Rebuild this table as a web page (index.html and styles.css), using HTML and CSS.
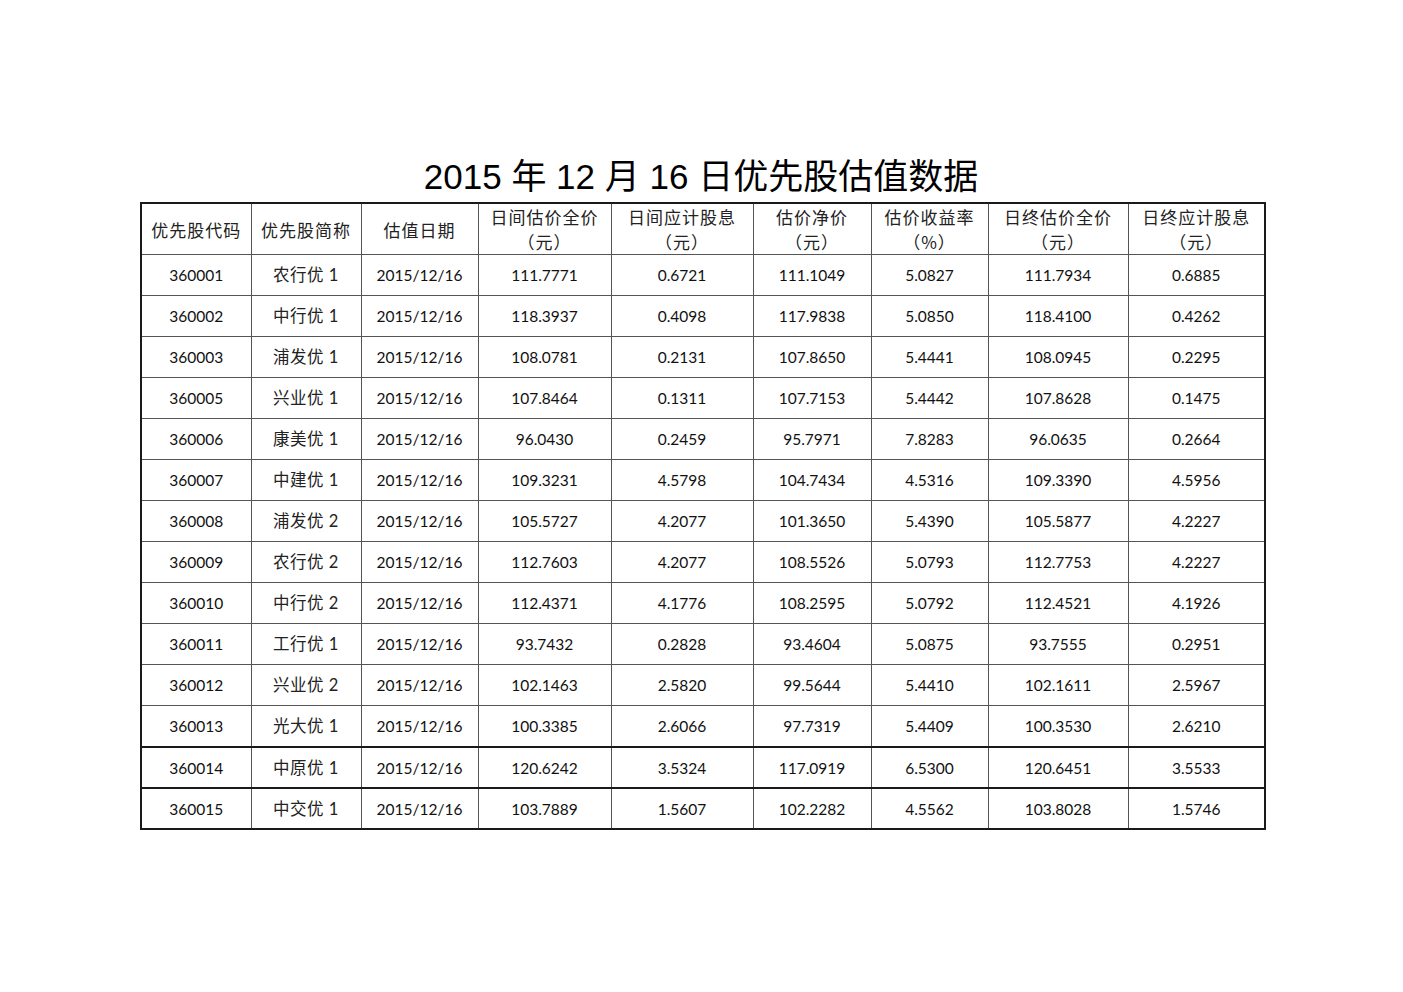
FILE: index.html
```html
<!DOCTYPE html>
<html lang="zh">
<head>
<meta charset="utf-8">
<link rel="stylesheet" href="styles.css">
</head>
<body>
<div class="page">
  <h1 class="title">2015 年 12 月 16 日优先股估值数据</h1>
  <table class="grid">
    <colgroup>
      <col class="c1"><col class="c2"><col class="c3"><col class="c4"><col class="c5"><col class="c6"><col class="c7"><col class="c8"><col class="c9">
    </colgroup>
    <thead>
      <tr>
        <th>优先股代码</th>
        <th>优先股简称</th>
        <th>估值日期</th>
        <th>日间估价全价<br>（元）</th>
        <th>日间应计股息<br>（元）</th>
        <th>估价净价<br>（元）</th>
        <th>估价收益率<br>（%）</th>
        <th>日终估价全价<br>（元）</th>
        <th>日终应计股息<br>（元）</th>
      </tr>
    </thead>
    <tbody>
      <tr><td>360001</td><td class="nm">农行优 1</td><td>2015/12/16</td><td>111.7771</td><td>0.6721</td><td>111.1049</td><td>5.0827</td><td>111.7934</td><td>0.6885</td></tr>
      <tr><td>360002</td><td class="nm">中行优 1</td><td>2015/12/16</td><td>118.3937</td><td>0.4098</td><td>117.9838</td><td>5.0850</td><td>118.4100</td><td>0.4262</td></tr>
      <tr><td>360003</td><td class="nm">浦发优 1</td><td>2015/12/16</td><td>108.0781</td><td>0.2131</td><td>107.8650</td><td>5.4441</td><td>108.0945</td><td>0.2295</td></tr>
      <tr><td>360005</td><td class="nm">兴业优 1</td><td>2015/12/16</td><td>107.8464</td><td>0.1311</td><td>107.7153</td><td>5.4442</td><td>107.8628</td><td>0.1475</td></tr>
      <tr><td>360006</td><td class="nm">康美优 1</td><td>2015/12/16</td><td>96.0430</td><td>0.2459</td><td>95.7971</td><td>7.8283</td><td>96.0635</td><td>0.2664</td></tr>
      <tr><td>360007</td><td class="nm">中建优 1</td><td>2015/12/16</td><td>109.3231</td><td>4.5798</td><td>104.7434</td><td>4.5316</td><td>109.3390</td><td>4.5956</td></tr>
      <tr><td>360008</td><td class="nm">浦发优 2</td><td>2015/12/16</td><td>105.5727</td><td>4.2077</td><td>101.3650</td><td>5.4390</td><td>105.5877</td><td>4.2227</td></tr>
      <tr><td>360009</td><td class="nm">农行优 2</td><td>2015/12/16</td><td>112.7603</td><td>4.2077</td><td>108.5526</td><td>5.0793</td><td>112.7753</td><td>4.2227</td></tr>
      <tr><td>360010</td><td class="nm">中行优 2</td><td>2015/12/16</td><td>112.4371</td><td>4.1776</td><td>108.2595</td><td>5.0792</td><td>112.4521</td><td>4.1926</td></tr>
      <tr><td>360011</td><td class="nm">工行优 1</td><td>2015/12/16</td><td>93.7432</td><td>0.2828</td><td>93.4604</td><td>5.0875</td><td>93.7555</td><td>0.2951</td></tr>
      <tr><td>360012</td><td class="nm">兴业优 2</td><td>2015/12/16</td><td>102.1463</td><td>2.5820</td><td>99.5644</td><td>5.4410</td><td>102.1611</td><td>2.5967</td></tr>
      <tr><td>360013</td><td class="nm">光大优 1</td><td>2015/12/16</td><td>100.3385</td><td>2.6066</td><td>97.7319</td><td>5.4409</td><td>100.3530</td><td>2.6210</td></tr>
      <tr class="thick"><td>360014</td><td class="nm">中原优 1</td><td>2015/12/16</td><td>120.6242</td><td>3.5324</td><td>117.0919</td><td>6.5300</td><td>120.6451</td><td>3.5533</td></tr>
      <tr class="thick"><td>360015</td><td class="nm">中交优 1</td><td>2015/12/16</td><td>103.7889</td><td>1.5607</td><td>102.2282</td><td>4.5562</td><td>103.8028</td><td>1.5746</td></tr>
    </tbody>
  </table>
</div>
</body>
</html>
```

FILE: styles.css
```css
html, body {
  margin: 0;
  padding: 0;
  background: #ffffff;
}

.page {
  padding: 155px 0 0 140px;
  width: 1124px;
}

.title {
  margin: 0 0 3px 0;
  font-family: "Liberation Sans", "Noto Sans CJK SC", sans-serif;
  font-weight: normal;
  font-size: 35px;
  line-height: 44px;
  text-align: center;
  color: #000;
  padding-right: 2px;
}

.grid {
  border-collapse: collapse;
  table-layout: fixed;
  width: 1124px;
  border: 2px solid #1a1a1a;
  font-family: Lato, "Noto Sans CJK SC", sans-serif;
  font-size: 15.5px;
  color: #111;
}

.c1 { width: 110px; }
.c2 { width: 110px; }
.c3 { width: 117px; }
.c4 { width: 133px; }
.c5 { width: 142px; }
.c6 { width: 118px; }
.c7 { width: 117px; }
.c8 { width: 140px; }
.c9 { width: 137px; }

.grid th,
.grid td {
  border: 1px solid #555;
  text-align: center;
  padding: 0;
  font-weight: normal;
}

.grid th {
  height: 50px;
  line-height: 25px;
  font-family: "Noto Sans CJK SC", sans-serif;
  font-size: 17px;
  letter-spacing: 1px;
  color: #222;
}

.grid td {
  height: 40px;
  line-height: 20px;
}

.grid td.nm {
  font-size: 16.5px;
  letter-spacing: 0.5px;
  color: #222;
}

.grid tr.thick td {
  height: 39px;
  border-top: 2px solid #1a1a1a;
}
```
